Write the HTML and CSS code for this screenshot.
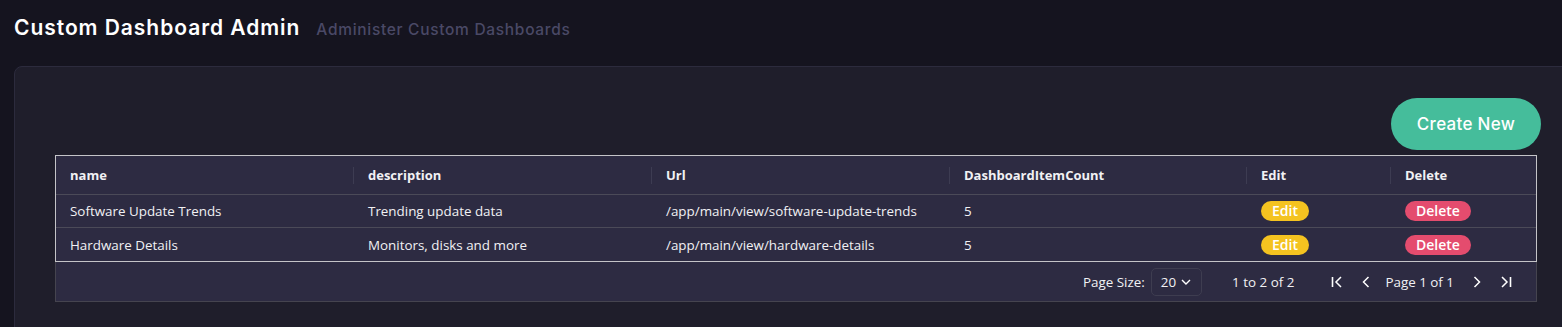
FILE: index.html
```html
<!DOCTYPE html>
<html lang="en">
<head>
  <meta charset="UTF-8">
  <meta name="viewport" content="width=device-width, initial-scale=1.0">
  <title>Custom Dashboard Admin</title>
  <link rel="stylesheet" href="styles.css">
</head>
<body>
  <header class="page-header">
    <h1>Custom Dashboard Admin</h1>
    <span class="subtitle">Administer Custom Dashboards</span>
  </header>

  <section class="card">
    <div class="toolbar">
      <button class="btn-create">Create New</button>
    </div>

    <div class="grid">
      <div class="grid-body">
        <div class="row head">
          <div class="cell">name</div>
          <div class="cell">description</div>
          <div class="cell">Url</div>
          <div class="cell">DashboardItemCount</div>
          <div class="cell">Edit</div>
          <div class="cell last">Delete</div>
        </div>
        <div class="row">
          <div class="cell">Software Update Trends</div>
          <div class="cell">Trending update data</div>
          <div class="cell">/app/main/view/software-update-trends</div>
          <div class="cell">5</div>
          <div class="cell"><span class="badge edit">Edit</span></div>
          <div class="cell"><span class="badge delete">Delete</span></div>
        </div>
        <div class="row">
          <div class="cell">Hardware Details</div>
          <div class="cell">Monitors, disks and more</div>
          <div class="cell">/app/main/view/hardware-details</div>
          <div class="cell">5</div>
          <div class="cell"><span class="badge edit">Edit</span></div>
          <div class="cell"><span class="badge delete">Delete</span></div>
        </div>
      </div>

      <div class="grid-footer">
        <span>Page Size:</span>
        <div class="page-size">
          20
          <svg width="12" height="12" viewBox="0 0 12 12"><path d="M2 4 L6 8 L10 4" fill="none" stroke="#fff" stroke-width="1.4"/></svg>
        </div>
        <span class="summary">1 to 2 of 2</span>
        <div class="pager">
          <svg width="12" height="14" viewBox="0 0 12 14"><path d="M1.5 2 V12" stroke="#fff" stroke-width="1.6"/><path d="M10 2 L5 7 L10 12" fill="none" stroke="#fff" stroke-width="1.5"/></svg>
          <svg class="gap" width="10" height="14" viewBox="0 0 10 14"><path d="M7.5 2 L2.5 7 L7.5 12" fill="none" stroke="#fff" stroke-width="1.5"/></svg>
          <span class="page-label">Page 1 of 1</span>
          <svg width="10" height="14" viewBox="0 0 10 14"><path d="M2.5 2 L7.5 7 L2.5 12" fill="none" stroke="#fff" stroke-width="1.5"/></svg>
          <svg class="gap" width="12" height="14" viewBox="0 0 12 14"><path d="M2 2 L7 7 L2 12" fill="none" stroke="#fff" stroke-width="1.5"/><path d="M10.5 2 V12" stroke="#fff" stroke-width="1.6"/></svg>
        </div>
      </div>
    </div>
  </section>
</body>
</html>
```

FILE: styles.css
```css
body {
  margin: 0;
  padding: 0 0 0 14px;
  background-color: #15141f;
  color: #f1f1f4;
  font-family: 'Open Sans', 'Noto Sans', sans-serif;
  overflow: hidden;
  height: 327px;
}

.page-header {
  display: flex;
  align-items: baseline;
  gap: 16px;
  padding-top: 15px;
  height: 66px;
  box-sizing: border-box;
}

.page-header h1 {
  margin: 0;
  font-family: 'Inter', sans-serif;
  font-size: 21px;
  font-weight: 600;
  letter-spacing: 0.95px;
  color: #ffffff;
}

.subtitle {
  font-family: 'Inter', sans-serif;
  font-size: 15.5px;
  font-weight: 500;
  letter-spacing: 0.7px;
  color: #4a4966;
}

.card {
  width: 1564px;
  box-sizing: border-box;
  background-color: #1f1e2b;
  border: 1px solid #2c2b3d;
  border-radius: 8px;
  padding: 31px 40px 40px 40px;
}

.toolbar {
  display: flex;
  justify-content: flex-end;
  margin-right: -4px;
  margin-bottom: 5px;
}

.btn-create {
  width: 150px;
  height: 52px;
  border: none;
  border-radius: 26px;
  background-color: #45bd9b;
  color: #ffffff;
  font-family: 'Inter', sans-serif;
  font-size: 17px;
  font-weight: 500;
  letter-spacing: 0.3px;
  cursor: pointer;
}

.grid {
  border: 1px solid #45444f;
  background-color: #2d2b42;
  font-size: 13.4px;
}

.grid-body {
  margin: -1px -1px 0 -1px;
  border: 1px solid #c4c4c8;
}

.row {
  display: grid;
  grid-template-columns: 298px 298px 298px 297px 144px 1fr;
  height: 32px;
  align-items: center;
  border-top: 1px solid #4b4a58;
}

.row:last-child {
  height: 33px;
}

.row.head {
  height: 38px;
  border-top: none;
  font-weight: 700;
  font-size: 13px;
}

.cell {
  padding-left: 14px;
  white-space: nowrap;
}

.row.head .cell {
  position: relative;
}

.row.head .cell::after {
  content: "";
  position: absolute;
  right: 0;
  top: 1px;
  height: 17px;
  border-right: 1px solid #3d3c52;
}

.row.head .cell.last::after {
  display: none;
}

.badge {
  display: inline-block;
  height: 20px;
  line-height: 20px;
  padding: 0 11px;
  border-radius: 10px;
  font-size: 14px;
  font-weight: 600;
  color: #ffffff;
}

.badge.edit {
  background-color: #f4c320;
}

.badge.delete {
  background-color: #e44c6e;
}

.grid-footer {
  display: flex;
  justify-content: flex-end;
  align-items: center;
  height: 39px;
  padding-right: 24px;
}

.page-size {
  display: flex;
  align-items: center;
  gap: 4px;
  height: 26px;
  margin-left: 6px;
  padding: 0 9px;
  border: 1px solid #3e3d50;
  border-radius: 5px;
}

.summary {
  margin-left: 30px;
  margin-right: 37px;
}

.pager {
  display: flex;
  align-items: center;
}

.pager .gap {
  margin-left: 18px;
}

.page-label {
  margin: 0 18px 0 14px;
}
```
